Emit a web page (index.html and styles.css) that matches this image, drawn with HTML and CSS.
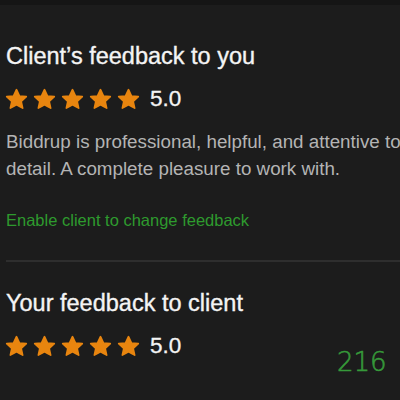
FILE: index.html
```html
<!DOCTYPE html>
<html lang="en">
<head>
    <meta charset="UTF-8">
    <meta name="viewport" content="width=device-width, initial-scale=1.0">
    <title>Feedback</title>
    <link rel="stylesheet" href="styles.css">
</head>
<body>
    <div class="top-bar"></div>

    <div class="feedback">
        <section class="feedback-block">
            <h2 class="feedback-title">Client’s feedback to you</h2>
            <div class="rating">
                <span class="stars">
                    <svg class="star" viewBox="0 0 24 24"><path d="M12 2.6l2.8 6 6.6.7-4.9 4.5 1.4 6.5L12 17l-5.9 3.3 1.4-6.5-4.9-4.5 6.6-.7z"/></svg>
                    <svg class="star" viewBox="0 0 24 24"><path d="M12 2.6l2.8 6 6.6.7-4.9 4.5 1.4 6.5L12 17l-5.9 3.3 1.4-6.5-4.9-4.5 6.6-.7z"/></svg>
                    <svg class="star" viewBox="0 0 24 24"><path d="M12 2.6l2.8 6 6.6.7-4.9 4.5 1.4 6.5L12 17l-5.9 3.3 1.4-6.5-4.9-4.5 6.6-.7z"/></svg>
                    <svg class="star" viewBox="0 0 24 24"><path d="M12 2.6l2.8 6 6.6.7-4.9 4.5 1.4 6.5L12 17l-5.9 3.3 1.4-6.5-4.9-4.5 6.6-.7z"/></svg>
                    <svg class="star" viewBox="0 0 24 24"><path d="M12 2.6l2.8 6 6.6.7-4.9 4.5 1.4 6.5L12 17l-5.9 3.3 1.4-6.5-4.9-4.5 6.6-.7z"/></svg>
                </span>
                <span class="score">5.0</span>
            </div>
            <p class="comment">Biddrup is professional, helpful, and attentive to detail. A complete pleasure to work with.</p>
            <a href="#" class="action-link">Enable client to change feedback</a>
        </section>

        <section class="feedback-block">
            <h2 class="feedback-title">Your feedback to client</h2>
            <div class="rating">
                <span class="stars">
                    <svg class="star" viewBox="0 0 24 24"><path d="M12 2.6l2.8 6 6.6.7-4.9 4.5 1.4 6.5L12 17l-5.9 3.3 1.4-6.5-4.9-4.5 6.6-.7z"/></svg>
                    <svg class="star" viewBox="0 0 24 24"><path d="M12 2.6l2.8 6 6.6.7-4.9 4.5 1.4 6.5L12 17l-5.9 3.3 1.4-6.5-4.9-4.5 6.6-.7z"/></svg>
                    <svg class="star" viewBox="0 0 24 24"><path d="M12 2.6l2.8 6 6.6.7-4.9 4.5 1.4 6.5L12 17l-5.9 3.3 1.4-6.5-4.9-4.5 6.6-.7z"/></svg>
                    <svg class="star" viewBox="0 0 24 24"><path d="M12 2.6l2.8 6 6.6.7-4.9 4.5 1.4 6.5L12 17l-5.9 3.3 1.4-6.5-4.9-4.5 6.6-.7z"/></svg>
                    <svg class="star" viewBox="0 0 24 24"><path d="M12 2.6l2.8 6 6.6.7-4.9 4.5 1.4 6.5L12 17l-5.9 3.3 1.4-6.5-4.9-4.5 6.6-.7z"/></svg>
                </span>
                <span class="score">5.0</span>
            </div>
        </section>
    </div>

    <span class="counter">216</span>
</body>
</html>
```

FILE: styles.css
```css
/* Dark feedback panel */
body {
    margin: 0;
    background-color: #1c1c1c;
    font-family: "Liberation Sans", Arial, sans-serif;
    color: #f2f2f2;
    overflow: hidden;
    height: 400px;
    position: relative;
}

.top-bar {
    height: 5px;
    background-color: #151515;
}

.feedback {
    padding-left: 6px;
}

.feedback-block {
    padding-top: 36px;
}

.feedback-block + .feedback-block {
    border-top: 2px solid #2e2e2e;
    padding-top: 26px;
}

.feedback-title {
    margin: 0;
    font-size: 23.5px;
    font-weight: normal;
    line-height: 30px;
    color: #f4f4f4;
    -webkit-text-stroke: 0.35px #f4f4f4;
}

.rating {
    display: flex;
    align-items: center;
    gap: 9px;
    margin-top: 16px;
    height: 24px;
}

.stars {
    display: flex;
    gap: 3px;
    margin-left: -2px;
}

/* rounded tips come from the stroke join */
.star {
    width: 25px;
    height: 25px;
    fill: #e8850f;
    stroke: #e8850f;
    stroke-width: 1.6;
    stroke-linejoin: round;
}

.score {
    font-size: 22.5px;
    color: #f4f4f4;
    -webkit-text-stroke: 0.3px #f4f4f4;
}

.comment {
    margin: 17px 0 0;
    width: 410px;
    font-size: 18.8px;
    line-height: 27px;
    color: #b4b4b4;
}

.action-link {
    display: block;
    margin-top: 28px;
    margin-bottom: 30px;
    font-size: 16.5px;
    line-height: 20px;
    color: #2e9a2e;
    text-decoration: none;
}

/* overlay counter in the corner */
.counter {
    position: absolute;
    left: 337px;
    top: 347px;
    font-family: "DejaVu Sans", sans-serif;
    font-weight: 200;
    font-size: 26px;
    color: #36993a;
    -webkit-text-stroke: 0.6px #36993a;
}
```
